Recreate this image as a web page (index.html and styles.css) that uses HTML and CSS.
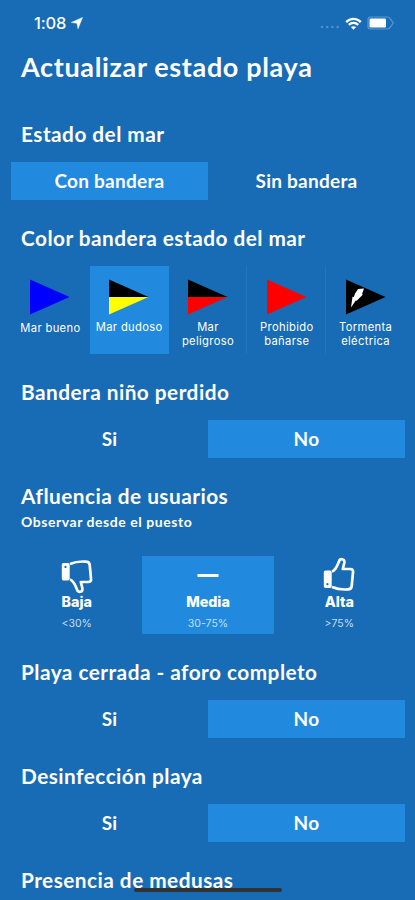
FILE: index.html
```html
<!DOCTYPE html>
<html lang="es">
<head>
<meta charset="utf-8">
<meta name="viewport" content="width=device-width">
<title>Actualizar estado playa</title>
<link rel="stylesheet" href="styles.css">
</head>
<body>
<header class="status">
  <span class="time">1:08</span>
  <svg class="loc" width="12" height="12" viewBox="0 0 12 12"><path d="M11.500.5 7 11.800 6 6.300.300 5.400z" fill="#fff" stroke="#fff" stroke-width=".5"/></svg>
  <svg class="dots" width="20" height="4" viewBox="0 0 20 4" fill="#4f90cb"><circle cx="2" cy="2" r="1.3"/><circle cx="7.2" cy="2" r="1.3"/><circle cx="12.4" cy="2" r="1.3"/><circle cx="17.6" cy="2" r="1.3"/></svg>
  <svg class="wifi" width="17" height="13" viewBox="0 0 17 13" fill="none" stroke="#fff" stroke-width="2.3"><path d="M1.2 5.1C5.2.9 11.8.9 15.8 5.1M3.8 7.9c2.600-2.600 6.800-2.600 9.400 0"/><path d="M8.500 12.700 5.900 10.100c1.400-1.300 3.800-1.300 5.200 0z" fill="#fff" stroke="none"/></svg>
  <svg class="battery" width="28" height="14" viewBox="0 0 28 14"><path d="M3.500 1h16.500q2.500 0 3.300 1.800L26.300 7l-3 4.200Q22.500 13 20 13H3.500Q1 13 1 10.500v-7Q1 1 3.500 1z" fill="none" stroke="#5b9ad2" stroke-width="1.200"/><rect x="2.500" y="2.500" width="16.500" height="9" rx="1.300" fill="#fff"/></svg>
</header>
<main>
  <h1>Actualizar estado playa</h1>
  <section>
    <h2>Estado del mar</h2>
    <div class="choices"><div class="choice on">Con bandera</div><div class="choice">Sin bandera</div></div>
  </section>
  <section>
    <h2>Color bandera estado del mar</h2>
    <div class="flags">
      <div class="flag"><svg width="40" height="36" viewBox="0 0 40 36"><path d="M0 .5 39.500 18 0 35.500z" fill="#00f"/></svg><span class="low">Mar bueno</span></div>
      <div class="flag on"><svg width="40" height="36" viewBox="0 0 40 36"><path d="M0 .5 39.500 18H0z"/><path d="M0 18h39.500L0 35.500z" fill="#ff0"/></svg><span>Mar dudoso</span></div>
      <div class="flag"><svg width="40" height="36" viewBox="0 0 40 36"><path d="M0 .5 39.500 18H0z"/><path d="M0 18h39.500L0 35.500z" fill="#f00"/></svg><span>Mar<br>peligroso</span></div>
      <div class="flag"><svg width="40" height="36" viewBox="0 0 40 36"><path d="M0 .5 39.500 18 0 35.500z" fill="#f00"/></svg><span>Prohibido<br>bañarse</span></div>
      <div class="flag"><svg width="40" height="36" viewBox="0 0 40 36"><path d="M0 .5 39.500 18 0 35.500z"/><path d="M12 10 18 9.500l-2 5.700 1 .4-6.300 6.200-.9-.3L5 28.500l1.500-10.800 1.400.2 1-3.200z" fill="#fff"/></svg><span>Tormenta<br>eléctrica</span></div>
    </div>
  </section>
  <section>
    <h2>Bandera niño perdido</h2>
    <div class="choices"><div class="choice">Si</div><div class="choice on">No</div></div>
  </section>
  <section>
    <h2>Afluencia de usuarios</h2>
    <p class="note">Observar desde el puesto</p>
    <div class="levels">
      <div class="level"><svg class="down" width="32" height="34" viewBox="0 0 32 34"><use href="#thumb"/></svg><b>Baja</b><small>&lt;30%</small></div>
      <div class="level on"><svg width="32" height="34" viewBox="0 0 32 34"><path d="M5.500 18.500h21" stroke="#fff" stroke-width="3"/></svg><b>Media</b><small>30-75%</small></div>
      <div class="level"><svg width="32" height="34" viewBox="0 0 32 34"><g id="thumb"><path d="M9 14.500C12.500 13.500 14.500 8.500 16 4.500 17 1 22 1.500 21.300 6L19.800 12h7.500c2 0 3 1.300 2.700 3.300L28.700 29c-.2 2.300-1.500 3.300-3.700 3.400-5.500.4-10.500 0-16-2.400" fill="none" stroke="#fff" stroke-width="2.700" stroke-linejoin="round"/><path fill-rule="evenodd" d="M2.500 13.500h4.500q1.700 0 1.700 1.700v14q0 1.800-1.700 1.800H2.500q-1.700 0-1.700-1.800v-14q0-1.700 1.700-1.700zM4.400 26a1.100 1.100 0 1 0 .1 0z" fill="#fff"/></g></svg><b>Alta</b><small>&gt;75%</small></div>
    </div>
  </section>
  <section>
    <h2>Playa cerrada - aforo completo</h2>
    <div class="choices"><div class="choice">Si</div><div class="choice on">No</div></div>
  </section>
  <section>
    <h2>Desinfección playa</h2>
    <div class="choices"><div class="choice">Si</div><div class="choice on">No</div></div>
  </section>
  <section>
    <h2>Presencia de medusas</h2>
  </section>
</main>
<div class="home"></div>
</body>
</html>
```

FILE: styles.css
```css
* { box-sizing: border-box; }
html, body { height: 900px; overflow: hidden; }
body { margin: 0; background: #186bb5; color: #fff; font-family: Lato, sans-serif; }
svg { display: block; flex: none; }
.status { height: 46px; display: flex; align-items: center; padding: 0 20px 0 34px; font: 500 16.500px Inter, sans-serif; }
.time { width: 33px; letter-spacing: -.2px; white-space: nowrap; }
.loc { margin-left: 4px; }
.dots { margin: 8px 5px 0 auto; }
.battery { margin-left: 5px; }
main { padding: 0 10px 0 11px; }
h1 { margin: 0 0 40px 10px; height: 36px; font-size: 27px; font-weight: 700; line-height: 41px; letter-spacing: .65px; white-space: nowrap; }
h2 { margin: 0 0 16px 10px; height: 24px; font-size: 20.800px; font-weight: 700; line-height: 23px; letter-spacing: .47px; white-space: nowrap; }
section { margin-bottom: 26px; }
.choices { display: grid; grid-template-columns: 1fr 1fr; height: 38px; }
.choice { display: flex; align-items: center; justify-content: center; padding-bottom: 1px; font-size: 19px; line-height: 22px; font-weight: 700; letter-spacing: .25px; }
.on { background: #218adf; }
.flags { display: grid; grid-template-columns: repeat(5, 1fr); height: 88px; }
.flag { display: flex; flex-direction: column; align-items: center; padding-top: 13px; font: 400 11.200px/14px Inter, sans-serif; text-align: center; letter-spacing: .35px; }
.flag span { margin-top: 5px; white-space: nowrap; }
.flag .low { margin-top: 6px; }
.flag:nth-child(n+4) { box-shadow: -1px 0 #2474bd; }
.note { margin: -11px 0 25px 10px; height: 18px; font-size: 14px; font-weight: 700; line-height: 18px; letter-spacing: .55px; }
.levels { display: grid; grid-template-columns: repeat(3, 1fr); height: 78px; }
.level { display: flex; flex-direction: column; align-items: center; padding-top: 1px; font-family: Inter, sans-serif; }
.level b { font-size: 14.300px; font-weight: 800; line-height: 18px; margin-top: 2px; }
.level small { font-size: 10.500px; line-height: 14px; margin-top: 6px; color: #c6def4; }
.down { transform: translateY(3px) scaleY(-1); }
.home { position: fixed; left: 134px; top: 888px; width: 148px; height: 4px; border-radius: 2px; background: #303236; }
```
